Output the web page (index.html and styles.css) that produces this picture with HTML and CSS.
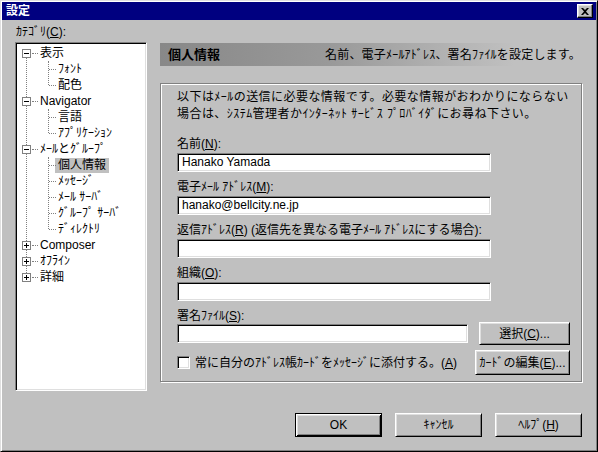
FILE: index.html
```html
<!DOCTYPE html>
<html>

<head>
    <meta charset="utf-8">
    <title>設定</title>
    <link rel="stylesheet" href="styles.css">
</head>

<body>
    <div class="window">
        <div class="titlebar">
            <span class="title">設定</span>
            <span class="close-btn">
                <svg width="8" height="7" viewBox="0 0 8 7">
                    <path d="M0 0h2l2 2 2-2h2L5 3.5 8 7H6L4 5 2 7H0l3-3.5z" fill="#000"/>
                </svg>
            </span>
        </div>

        <div class="content">
            <div class="main">
                <!-- Category tree -->
                <div class="side">
                    <div class="side-label">ｶﾃｺﾞﾘ(<u>C</u>):</div>
                    <div class="tree">
                        <div class="tree-list">
                            <div class="node root"><span class="exp"></span><span class="dash"></span><span>表示</span></div>
                            <div class="children">
                                <div class="node child">ﾌｫﾝﾄ</div>
                                <div class="node child">配色</div>
                            </div>
                            <div class="node root"><span class="exp"></span><span class="dash"></span><span>Navigator</span></div>
                            <div class="children">
                                <div class="node child">言語</div>
                                <div class="node child">ｱﾌﾟﾘｹｰｼｮﾝ</div>
                            </div>
                            <div class="node root"><span class="exp"></span><span class="dash"></span><span>ﾒｰﾙとｸﾞﾙｰﾌﾟ</span></div>
                            <div class="children">
                                <div class="node child"><span class="sel">個人情報</span></div>
                                <div class="node child">ﾒｯｾｰｼﾞ</div>
                                <div class="node child">ﾒｰﾙ ｻｰﾊﾞ</div>
                                <div class="node child">ｸﾞﾙｰﾌﾟ ｻｰﾊﾞ</div>
                                <div class="node child">ﾃﾞｨﾚｸﾄﾘ</div>
                            </div>
                            <div class="node root"><span class="exp plus"></span><span class="dash"></span><span>Composer</span></div>
                            <div class="node root"><span class="exp plus"></span><span class="dash"></span><span>ｵﾌﾗｲﾝ</span></div>
                            <div class="node root"><span class="exp plus"></span><span class="dash"></span><span>詳細</span></div>
                        </div>
                    </div>
                </div>

                <!-- Identity panel -->
                <div class="panel">
                    <div class="panel-head">
                        <span class="panel-title">個人情報</span>
                        <span class="panel-desc">名前、電子ﾒｰﾙｱﾄﾞﾚｽ、署名ﾌｧｲﾙを設定します。</span>
                    </div>
                    <div class="group">
                        <p class="intro">以下はﾒｰﾙの送信に必要な情報です。必要な情報がおわかりにならない<br>場合は、ｼｽﾃﾑ管理者かｲﾝﾀｰﾈｯﾄ ｻｰﾋﾞｽ ﾌﾟﾛﾊﾞｲﾀﾞにお尋ね下さい。</p>

                        <div class="field first">
                            <label class="field-label">名前(<u>N</u>):</label>
                            <div class="textbox">Hanako Yamada</div>
                        </div>
                        <div class="field">
                            <label class="field-label">電子ﾒｰﾙ ｱﾄﾞﾚｽ(<u>M</u>):</label>
                            <div class="textbox">hanako@bellcity.ne.jp</div>
                        </div>
                        <div class="field">
                            <label class="field-label">返信ｱﾄﾞﾚｽ(<u>R</u>) (返信先を異なる電子ﾒｰﾙ ｱﾄﾞﾚｽにする場合):</label>
                            <div class="textbox"></div>
                        </div>
                        <div class="field">
                            <label class="field-label">組織(<u>O</u>):</label>
                            <div class="textbox"></div>
                        </div>
                        <div class="field">
                            <label class="field-label">署名ﾌｧｲﾙ(<u>S</u>):</label>
                            <div class="sig-row">
                                <div class="textbox short"></div>
                                <button class="btn pick">選択(<u>C</u>)...</button>
                            </div>
                        </div>
                        <div class="check-row">
                            <span class="check"></span>
                            <span class="check-label">常に自分のｱﾄﾞﾚｽ帳ｶｰﾄﾞをﾒｯｾｰｼﾞに添付する。(<u>A</u>)</span>
                            <button class="btn card">ｶｰﾄﾞの編集(<u>E</u>)...</button>
                        </div>
                    </div>
                </div>
            </div>

            <div class="actions">
                <button class="btn action default">OK</button>
                <button class="btn action">ｷｬﾝｾﾙ</button>
                <button class="btn action">ﾍﾙﾌﾟ(<u>H</u>)</button>
            </div>
        </div>
    </div>
</body>

</html>
```

FILE: styles.css
```css
* {
    margin: 0;
    padding: 0;
    box-sizing: border-box;
}

body {
    font-family: "Liberation Sans", "Noto Sans CJK JP", sans-serif;
    font-size: 12px;
    color: #000000;
    background: #c0c0c0;
    width: 598px;
    height: 452px;
    overflow: hidden;
}

u {
    text-decoration: underline;
}

/* Window frame */
.window {
    width: 598px;
    height: 452px;
    background: #c0c0c0;
    border: 1px solid;
    border-color: #dfdfdf #000000 #000000 #dfdfdf;
    box-shadow: inset 1px 1px #ffffff, inset -1px -1px #808080;
    padding: 1px;
}

.titlebar {
    height: 18px;
    background: #000080;
    color: #ffffff;
    display: flex;
    align-items: center;
    justify-content: space-between;
    padding: 0 3px 0 4px;
}

.title {
    font-weight: bold;
    font-size: 12px;
    line-height: 18px;
}

.close-btn {
    width: 16px;
    height: 14px;
    background: #c0c0c0;
    border: 1px solid;
    border-color: #ffffff #000000 #000000 #ffffff;
    box-shadow: inset -1px -1px #808080, inset 1px 1px #dfdfdf;
    display: flex;
    align-items: center;
    justify-content: center;
}

.content {
    padding: 5px 14px 0 13px;
}

.main {
    display: flex;
    gap: 13px;
}

/* Category tree */
.side {
    width: 132px;
}

.side-label {
    height: 14px;
    line-height: 14px;
    margin-bottom: 3px;
    padding-left: 1px;
}

.tree {
    height: 349px;
    background: #ffffff;
    border: 1px solid;
    border-color: #808080 #ffffff #ffffff #808080;
    box-shadow: inset 1px 1px #000000, inset -1px -1px #dfdfdf;
    padding: 2px 1px;
}

.tree-list {
    position: relative;
}

.tree-list::before {
    content: '';
    position: absolute;
    left: 9px;
    top: 8px;
    bottom: 8px;
    border-left: 1px dotted #808080;
}

.node {
    height: 16px;
    line-height: 16px;
    display: flex;
    align-items: center;
    position: relative;
    white-space: nowrap;
}

.root {
    padding-left: 5px;
}

.exp {
    width: 9px;
    height: 9px;
    flex: none;
    border: 1px solid #808080;
    background: #ffffff;
    position: relative;
    z-index: 1;
}

.exp::before {
    content: '';
    position: absolute;
    left: 1px;
    top: 3px;
    width: 5px;
    height: 1px;
    background: #000000;
}

.exp.plus::after {
    content: '';
    position: absolute;
    left: 3px;
    top: 1px;
    width: 1px;
    height: 5px;
    background: #000000;
}

.dash {
    width: 6px;
    flex: none;
    border-top: 1px dotted #808080;
    margin: 1px 2px 0 1px;
}

.children {
    position: relative;
}

.children::before {
    content: '';
    position: absolute;
    left: 31px;
    top: 0;
    bottom: 8px;
    border-left: 1px dotted #808080;
}

.child {
    padding-left: 41px;
}

.child::before {
    content: '';
    position: absolute;
    left: 32px;
    top: 8px;
    width: 7px;
    border-top: 1px dotted #808080;
}

.sel {
    background: #c0c0c0;
    padding: 0 3px;
    margin-left: -3px;
    line-height: 15px;
}

/* Right panel */
.panel {
    width: 422px;
    margin-top: 18px;
}

.panel-head {
    height: 23px;
    display: flex;
    align-items: center;
    justify-content: space-between;
    padding: 0 1px 0 8px;
    background: linear-gradient(to right, #888888 0%, #999999 40%, #b4b4b4 70%, #c0c0c0 84%);
}

.panel-title {
    font-weight: bold;
    font-size: 13px;
    line-height: 16px;
}

.panel-desc {
    line-height: 16px;
    letter-spacing: 0.2px;
}

.group {
    margin-top: 17px;
    height: 299px;
    border: 1px solid #808080;
    box-shadow: inset 1px 1px #ffffff, 1px 1px #ffffff;
    padding: 5px 0 0 16px;
}

.intro {
    line-height: 17px;
    white-space: nowrap;
    letter-spacing: 0.45px;
}

.field {
    margin-top: 7px;
}

.field.first {
    margin-top: 13px;
}

.field-label {
    display: block;
    line-height: 16px;
    height: 16px;
    margin-bottom: 1px;
    white-space: nowrap;
}

.textbox {
    width: 314px;
    height: 19px;
    background: #ffffff;
    border: 1px solid;
    border-color: #808080 #ffffff #ffffff #808080;
    box-shadow: inset 1px 1px #000000, inset -1px -1px #dfdfdf;
    padding: 0 4px;
    line-height: 17px;
    font-size: 12px;
}

.textbox.short {
    width: 291px;
}

.sig-row {
    display: flex;
    align-items: center;
    gap: 11px;
    height: 23px;
    margin-top: -3px;
}

.check-row {
    width: 393px;
    height: 25px;
    margin-top: 5px;
    display: flex;
    align-items: center;
}

.check {
    width: 13px;
    height: 13px;
    flex: none;
    background: #ffffff;
    border: 1px solid;
    border-color: #808080 #ffffff #ffffff #808080;
    box-shadow: inset 1px 1px #000000, inset -1px -1px #dfdfdf;
    margin-right: 5px;
}

.check-label {
    flex: 1;
    white-space: nowrap;
    line-height: 16px;
}

/* Buttons */
.btn {
    font-family: inherit;
    font-size: 12px;
    color: #000000;
    background: #c0c0c0;
    border: 1px solid;
    border-color: #ffffff #000000 #000000 #ffffff;
    box-shadow: inset 1px 1px #dfdfdf, inset -1px -1px #808080;
    display: flex;
    align-items: center;
    justify-content: center;
    line-height: 16px;
    white-space: nowrap;
}

.btn.pick {
    width: 91px;
    height: 23px;
    flex: none;
}

.btn.card {
    width: 95px;
    height: 25px;
    flex: none;
}

.actions {
    display: flex;
    justify-content: flex-end;
    gap: 13px;
    margin-top: 22px;
}

.btn.action {
    width: 87px;
    height: 24px;
}

.btn.default {
    border-color: #000000;
    box-shadow: inset 1px 1px #ffffff, inset -1px -1px #000000, inset 2px 2px #dfdfdf, inset -2px -2px #808080;
}
```
